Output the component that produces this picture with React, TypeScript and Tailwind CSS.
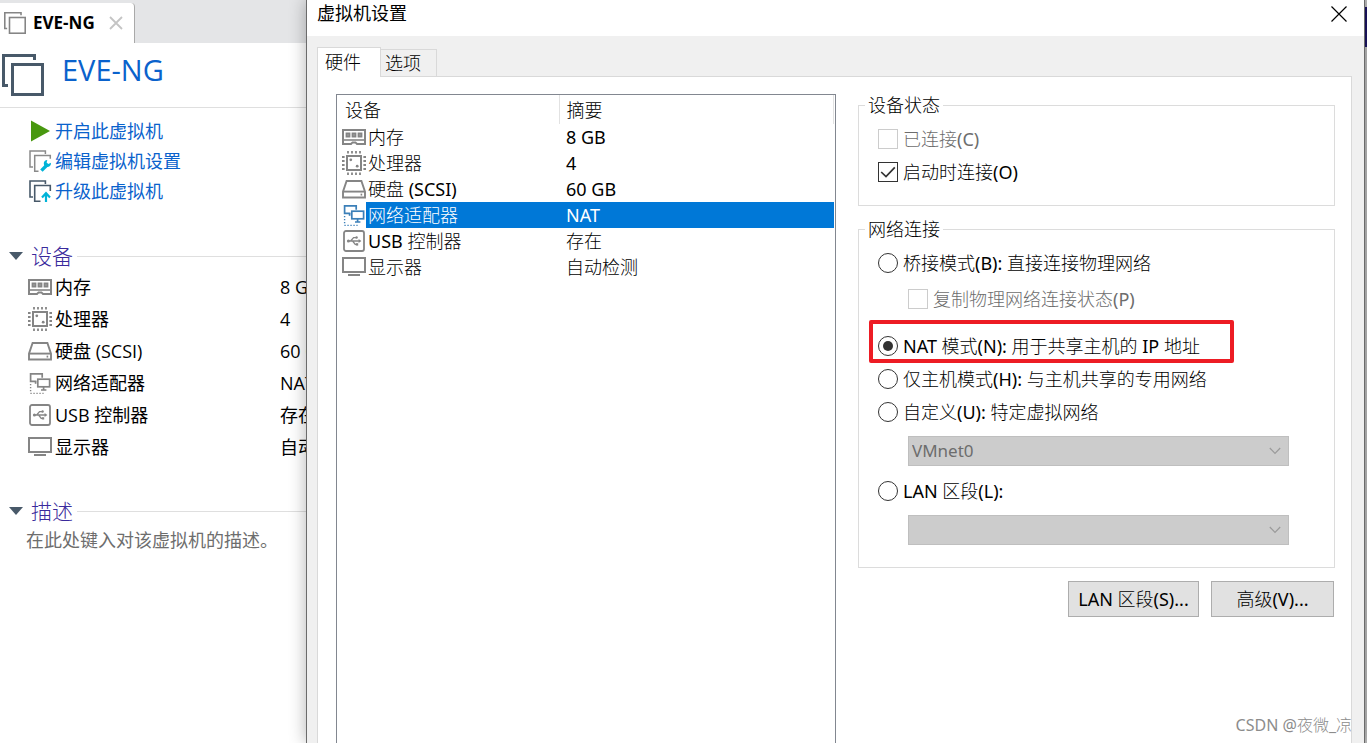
import React, { useState } from "react";

type IconProps = { className?: string };

const MemoryIcon = ({ className = "" }: IconProps) => (
  <svg viewBox="0 0 24 24" className={`size-6 shrink-0 ${className}`} fill="none" stroke="currentColor" aria-hidden="true">
    <path d="M1 5h22v14h-8l-1.600-1.600h-2.800L9 19H1z" strokeWidth="2" />
    <path d="M1 15h22" strokeWidth="1.6" />
    <path d="M4.500 8.500h3v3h-3zM10.500 8.500h3v3h-3zM16.500 8.500h3v3h-3z" fill="#b5b5b5" strokeWidth="1.8" />
  </svg>
);

const CpuIcon = ({ className = "" }: IconProps) => (
  <svg viewBox="0 0 24 24" className={`size-6 shrink-0 ${className}`} fill="none" stroke="currentColor" aria-hidden="true">
    <rect x="5" y="5" width="14" height="14" strokeWidth="2" />
    <path
      strokeWidth="1.8"
      d="M6 0v2.6M10 0v2.6M14 0v2.6M18 0v2.6M6 21.4V24M10 21.4V24M14 21.4V24M18 21.4V24M0 6h2.6M0 10h2.6M0 14h2.6M0 18h2.6M21.4 6H24M21.4 10H24M21.4 14H24M21.4 18H24"
    />
    <circle cx="8.8" cy="8.8" r="1.4" fill="currentColor" stroke="none" />
    <circle cx="15.2" cy="15.2" r="1.4" fill="currentColor" stroke="none" />
  </svg>
);

const DiskIcon = ({ className = "" }: IconProps) => (
  <svg viewBox="0 0 24 24" className={`size-6 shrink-0 ${className}`} fill="none" stroke="currentColor" strokeWidth="1.9" aria-hidden="true">
    <path d="M1 14.600 4.600 4h14.800L23 14.600V20.500H1z" />
    <path d="M1 14.600h22" />
    <path d="M18.6 17.6h1.6" />
  </svg>
);

const NetworkIcon = ({ className = "" }: IconProps) => (
  <svg viewBox="0 0 24 24" className={`size-6 shrink-0 ${className}`} fill="none" stroke="currentColor" strokeWidth="1.7" aria-hidden="true">
    <path d="M8.4 10.4H2.6V2.8h11.6v4" />
    <path d="M7.6 10.4v2.4" />
    <rect x="9.8" y="8.2" width="11.8" height="7.6" />
    <path d="M15.6 16v2.6M13 19h5.4" />
    <path d="M2.6 13v9M2.4 22.4h13.2" strokeWidth="1.4" strokeDasharray="1.3 1.7" />
  </svg>
);

const UsbIcon = ({ className = "" }: IconProps) => (
  <svg viewBox="0 0 24 24" className={`size-6 shrink-0 ${className}`} fill="none" stroke="currentColor" aria-hidden="true">
    <rect x="2" y="2" width="20" height="20" rx="2" strokeWidth="1.8" />
    <path d="M6 12h12M8.6 12l3-3.4h2.6M10.6 12l2.6 3.4h1.6" strokeWidth="1.3" />
    <circle cx="6.4" cy="12" r="1.5" fill="currentColor" stroke="none" />
    <path d="M16.600 10 19.400 12l-2.800 2z" fill="currentColor" stroke="none" />
    <circle cx="14.6" cy="8.5" r="1.2" fill="currentColor" stroke="none" />
    <path d="M13.800 14.200h2.400v2.400h-2.400z" fill="currentColor" stroke="none" />
  </svg>
);

const DisplayIcon = ({ className = "" }: IconProps) => (
  <svg viewBox="0 0 24 24" className={`size-6 shrink-0 ${className}`} fill="none" stroke="currentColor" strokeWidth="2" aria-hidden="true">
    <rect x="1" y="3" width="22" height="14" />
    <path d="M6 20h12" />
  </svg>
);

const MachineIcon = ({ className = "" }: IconProps) => (
  <svg viewBox="0 0 42 42" className={className} fill="none" stroke="currentColor" strokeWidth="3" aria-hidden="true">
    <path d="M6 31.5H1.5v-30h31V6" />
    <rect x="10.5" y="10.5" width="30" height="30" />
  </svg>
);

const PlayIcon = () => (
  <svg viewBox="0 0 24 24" className="size-6 shrink-0" aria-hidden="true">
    <path d="M3 1.5 22 12 3 22.5z" fill="#48980f" />
  </svg>
);

const EditIcon = () => (
  <svg viewBox="0 0 24 24" className="size-6 shrink-0" fill="none" strokeWidth="1.5" aria-hidden="true">
    <g stroke="#8a8a8a">
      <path d="M5 18H2V2h15.4v3" />
      <path d="M10.5 22.2H6.7V6.5h15.6v3.2" />
    </g>
    <path d="M13.4 21.6 19 16" stroke="#00b3d8" strokeWidth="3.4" />
    <path d="M22.9 13.8a3.6 3.6 0 1 1-3.6-2.9l-.7 2.7 1.7 1.3z" fill="#00b3d8" />
  </svg>
);

const UpgradeIcon = () => (
  <svg viewBox="0 0 24 24" className="size-6 shrink-0" fill="none" strokeWidth="1.6" aria-hidden="true">
    <g stroke="#485969">
      <path d="M5 18H2V2h15.4v3" />
      <path d="M12.5 22.2H6.7V6.5h15.6v5.600" />
    </g>
    <path d="M18 23V14.8M14 18.4l4-4.2 4 4.2" stroke="#00b3d8" strokeWidth="2.2" />
  </svg>
);

const devices = [
  { name: "内存", summary: "8 GB", Icon: MemoryIcon },
  { name: "处理器", summary: "4", Icon: CpuIcon },
  { name: "硬盘 (SCSI)", summary: "60 GB", Icon: DiskIcon },
  { name: "网络适配器", summary: "NAT", Icon: NetworkIcon },
  { name: "USB 控制器", summary: "存在", Icon: UsbIcon },
  { name: "显示器", summary: "自动检测", Icon: DisplayIcon },
];

const actions = [
  { label: "开启此虚拟机", Icon: PlayIcon },
  { label: "编辑虚拟机设置", Icon: EditIcon },
  { label: "升级此虚拟机", Icon: UpgradeIcon },
];

function SectionHeading({ title }: { title: string }) {
  return (
    <h2 className="flex h-[30px] items-center pl-[9px] font-['Open_Sans','Noto_Sans_CJK_SC_Light','Noto_Sans_CJK_SC',sans-serif] text-[21px] leading-[30px] text-[#3a2a9c]">
      <svg viewBox="0 0 14 8" className="h-2 w-3.5" aria-hidden="true">
        <path d="M0 0h14L7 8z" fill="#485969" />
      </svg>
      <span className="ml-2">{title}</span>
      <span className="ml-1 h-px flex-1 bg-[#dfdfdf]" />
    </h2>
  );
}

function LibraryPane() {
  return (
    <aside className="w-[306px] shrink-0 overflow-hidden whitespace-nowrap bg-white font-['Open_Sans','Noto_Sans_CJK_SC',sans-serif] text-lg">
      <div className="flex h-[43px] items-end bg-[#e4e5e7]">
        <div className="flex h-10 w-[135px] items-center rounded-tr border-r border-[#a9a9a9] bg-white pl-1">
          <MachineIcon className="size-[22px] text-[#858585]" />
          <span className="ml-[7px] text-[17px] font-bold text-black">EVE-NG</span>
          <button type="button" aria-label="关闭标签页" className="ml-3.5">
            <svg viewBox="0 0 14 14" className="size-3.5" stroke="#c4c4c4" strokeWidth="1.8" aria-hidden="true">
              <path d="M1 1l12 12M13 1 1 13" />
            </svg>
          </button>
        </div>
      </div>
      <div className="flex h-[65px] items-center border-b border-[#dfdfdf] pl-0.5">
        <MachineIcon className="size-[42px] text-[#485969]" />
        <h1 className="mb-2.5 ml-[18px] text-[29px] leading-9 text-[#0a62cc]">EVE-NG</h1>
      </div>
      <nav className="pt-2 pl-7">
        {actions.map(({ label, Icon }) => (
          <a key={label} href="#" className="flex h-[30px] items-center gap-[3px] text-[#0a62cc]">
            <Icon />
            {label}
          </a>
        ))}
      </nav>
      <section className="mt-[35px]">
        <SectionHeading title="设备" />
        <dl className="text-black">
          {devices.map(({ name, summary, Icon }) => (
            <div key={name} className="flex h-8 items-center pl-7">
              <Icon className="text-[#858585]" />
              <dt className="ml-[3px] w-[225px] shrink-0">{name}</dt>
              <dd>{summary}</dd>
            </div>
          ))}
        </dl>
      </section>
      <section className="mt-[33px]">
        <SectionHeading title="描述" />
        <p className="pl-[26px] leading-7 text-[#6d6d6d]">在此处键入对该虚拟机的描述。</p>
      </section>
    </aside>
  );
}

function DeviceTable() {
  return (
    <div className="w-[500px] shrink-0 border border-b-0 border-[#828790] pr-px">
      <table className="w-full table-fixed border-collapse text-left">
        <colgroup>
          <col className="w-[29px]" />
          <col className="w-[193px]" />
          <col />
        </colgroup>
        <thead>
          <tr className="h-[29px]">
            <th colSpan={2} className="border-r border-[#e2e2e2] p-0 pl-2 font-normal">设备</th>
            <th className="border-r border-[#e2e2e2] p-0 pl-[7px] font-normal">摘要</th>
          </tr>
        </thead>
        <tbody>
          {devices.map(({ name, summary, Icon }) => {
            const selected = name === "网络适配器";
            const cell = selected ? "bg-[#0078d7] text-white" : "";
            return (
              <tr key={name} className="h-[26px]" aria-selected={selected}>
                <td className="p-0 pl-[5px]">
                  <Icon className={selected ? "text-[#3b7fb8]" : "text-[#858585]"} />
                </td>
                <td className={`p-0 pl-0.5 ${cell}`}>{name}</td>
                <td className={`p-0 pl-[7px] ${cell}`}>{summary}</td>
              </tr>
            );
          })}
        </tbody>
      </table>
    </div>
  );
}

type OptionProps = {
  type: "checkbox" | "radio";
  label: string;
  checked: boolean;
  disabled?: boolean;
  className?: string;
  onChange?: () => void;
  children?: React.ReactNode;
};

function Option({ type, label, checked, disabled = false, className = "", onChange, children }: OptionProps) {
  const shape = type === "radio" ? "rounded-full" : "";
  return (
    <label className={`relative flex h-[33px] w-fit items-center gap-[5px] ${disabled ? "text-[#6d6d6d]" : "text-black"} ${className}`}>
      <span className="grid shrink-0 place-items-center">
        <input
          type={type}
          name={type === "radio" ? "connection" : undefined}
          checked={checked}
          disabled={disabled}
          onChange={onChange ?? (() => {})}
          className={`col-start-1 row-start-1 size-5 appearance-none border bg-white ${shape} ${disabled ? "border-[#cccccc]" : "border-[#333333]"}`}
        />
        {checked && type === "radio" && <span className="pointer-events-none col-start-1 row-start-1 size-2.5 rounded-full bg-[#333333]" />}
        {checked && type === "checkbox" && (
          <svg viewBox="0 0 20 20" className="pointer-events-none col-start-1 row-start-1 size-5" fill="none" stroke="#333333" strokeWidth="1.7" aria-hidden="true">
            <path d="M3.2 10 8 14.6 16.8 5.4" />
          </svg>
        )}
      </span>
      {label}
      {children}
    </label>
  );
}

function DisabledSelect({ label, value }: { label: string; value: string }) {
  return (
    <div className="mt-2 mr-[45px] ml-[30px] grid items-center">
      <select
        disabled
        aria-label={label}
        className="col-start-1 row-start-1 h-[30px] w-full appearance-none border border-[#bfbfbf] bg-[#cccccc] pl-[3px] text-[17px] text-[#6d6d6d] opacity-100"
      >
        <option>{value}</option>
      </select>
      <svg viewBox="0 0 12 8" className="pointer-events-none col-start-1 row-start-1 mr-2 h-2 w-3 justify-self-end" fill="none" stroke="#9a9a9a" strokeWidth="1.2" aria-hidden="true">
        <path d="M.8 1 6 6.4 11.2 1" />
      </svg>
    </div>
  );
}

const fieldsetClass = "min-w-0 border border-[#dcdcdc] pl-[19px]";
const legendClass = "-ml-[13px] h-[18px] px-[3px] leading-[18px] text-black";
const buttonClass = "h-9 border border-[#adadad] bg-[#e1e1e1] text-black";

function SettingsDialog() {
  const [startConnected, setStartConnected] = useState(true);
  const [mode, setMode] = useState("nat");

  return (
    <main
      role="dialog"
      aria-label="虚拟机设置"
      className="relative z-10 flex min-w-0 flex-1 flex-col border-x border-[#6b6b6b] bg-[#f0f0f0] font-['Noto_Sans','Noto_Sans_CJK_SC_Light','Noto_Sans_CJK_SC',sans-serif] text-lg leading-6 whitespace-nowrap text-black shadow-[0_0_16px_rgba(0,0,0,0.3)]"
    >
      <header className="flex h-9 shrink-0 items-start justify-between bg-white pr-[17px] pl-2.5">
        <h1 className="font-['Open_Sans','Noto_Sans_CJK_SC',sans-serif] leading-[26px]">虚拟机设置</h1>
        <button type="button" aria-label="关闭" className="mt-1.5">
          <svg viewBox="0 0 16 16" className="size-4" stroke="#000" strokeWidth="1.2" aria-hidden="true">
            <path d="M.5.5l15 15M15.500.5l-15 15" />
          </svg>
        </button>
      </header>
      <div className="flex flex-1 flex-col pt-[11px] pr-3 pl-2.5">
        <div role="tablist" className="z-10 -mb-px flex items-end">
          <button type="button" role="tab" aria-selected="true" className="h-[30px] w-16 border border-b-0 border-[#d9d9d9] bg-white pb-0.5 pl-[7px] text-left">
            硬件
          </button>
          <button type="button" role="tab" aria-selected="false" className="h-7 w-14 border border-l-0 border-[#d9d9d9] bg-[#f0f0f0] pl-1 text-left">
            选项
          </button>
        </div>
        <div className="flex flex-1 gap-[22px] border border-b-0 border-[#d9d9d9] bg-white pt-[17px] pr-4 pl-[18px]">
          <DeviceTable />
          <div className="min-w-0 flex-1 pt-0.5">
            <fieldset className={`${fieldsetClass} pb-[17px]`}>
              <legend className={legendClass}>设备状态</legend>
              <div className="pt-2">
                <Option type="checkbox" label="已连接(C)" checked={false} disabled />
                <Option type="checkbox" label="启动时连接(O)" checked={startConnected} onChange={() => setStartConnected(!startConnected)} />
              </div>
            </fieldset>
            <fieldset className={`${fieldsetClass} mt-3.5 pb-[22px]`}>
              <legend className={legendClass}>网络连接</legend>
              <div className="pt-2">
                <Option type="radio" label="桥接模式(B): 直接连接物理网络" checked={mode === "bridged"} onChange={() => setMode("bridged")} />
                <Option type="checkbox" label="复制物理网络连接状态(P)" checked={false} disabled className="mt-[3px] ml-[30px]" />
                <Option type="radio" label="NAT 模式(N): 用于共享主机的 IP 地址" checked={mode === "nat"} onChange={() => setMode("nat")} className="mt-3.5">
                  <span className="pointer-events-none absolute -top-[9px] -right-[34px] -bottom-px -left-[9px] rounded-xs border-4 border-[#ed1c24]" />
                </Option>
                <Option type="radio" label="仅主机模式(H): 与主机共享的专用网络" checked={mode === "host"} onChange={() => setMode("host")} />
                <Option type="radio" label="自定义(U): 特定虚拟网络" checked={mode === "custom"} onChange={() => setMode("custom")} />
                <DisabledSelect label="特定虚拟网络" value="VMnet0" />
                <Option type="radio" label="LAN 区段(L):" checked={mode === "lan"} onChange={() => setMode("lan")} className="mt-2" />
                <DisabledSelect label="LAN 区段" value="" />
              </div>
            </fieldset>
            <div className="mt-[13px] mr-px flex justify-end gap-3">
              <button type="button" className={`${buttonClass} w-[131px]`}>LAN 区段(S)...</button>
              <button type="button" className={`${buttonClass} w-[123px]`}>高级(V)...</button>
            </div>
          </div>
        </div>
      </div>
      <p className="absolute right-3 bottom-1.5 text-base text-[#8c8c8c]">CSDN @夜微_凉</p>
    </main>
  );
}

export default function App() {
  return (
    <div className="flex h-screen overflow-hidden bg-white">
      <LibraryPane />
      <SettingsDialog />
      <div className="w-0.5 shrink-0 bg-[#bdbdbd] pt-[7px]">
        <div className="h-10 bg-[#1b1464]" />
      </div>
    </div>
  );
}
